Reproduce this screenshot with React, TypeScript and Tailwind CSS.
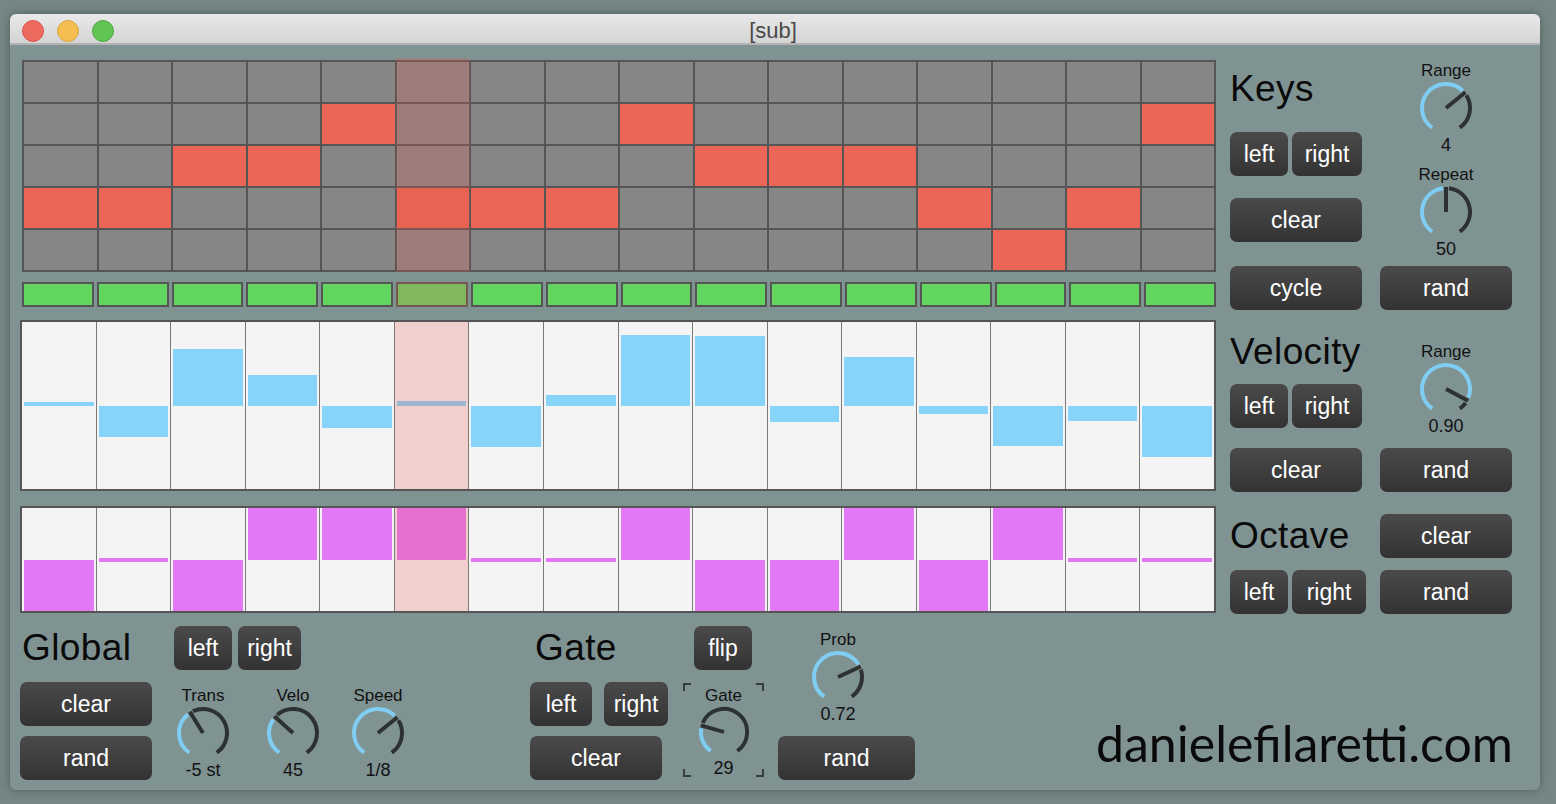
import React from "react";

const keys: number[][] = [[], [4, 8, 15], [2, 3, 9, 10, 11], [0, 1, 5, 6, 7, 12, 14], [13]];
const vel = [4, -31, 57, 31, -22, 5, -41, 11, 71, 70, -16, 49, -8, -40, -15, -51];
const oct = ["d", "l", "d", "u", "u", "u", "l", "l", "u", "d", "d", "u", "d", "u", "l", "l"];
const HL = 5;
const cols = Array.from({ length: 16 }, (_, i) => i);

function Btn({ label, w }: { label: string; w: string }) {
  return (
    <div
      className={`h-[44px] ${w} shrink-0 rounded-[7px] bg-[linear-gradient(180deg,#4a4a4a,#333333)] flex items-center justify-center text-white text-[23px] leading-none`}
    >
      {label}
    </div>
  );
}

function pt(a: number, r: number) {
  const rad = (a * Math.PI) / 180;
  return [28 + r * Math.sin(rad), 28 - r * Math.cos(rad)];
}
function arc(a1: number, a2: number, r: number) {
  const [x1, y1] = pt(a1, r);
  const [x2, y2] = pt(a2, r);
  const large = a2 - a1 > 180 ? 1 : 0;
  return `M ${x1} ${y1} A ${r} ${r} 0 ${large} 1 ${x2} ${y2}`;
}

function Knob({ label, value, frac }: { label: string; value: string; frac: number }) {
  const a = -145 + frac * 290;
  const [nx, ny] = pt(a, 25);
  return (
    <div className="w-[70px] flex flex-col items-center text-[#111]">
      <div className="h-[18px] leading-[18px] text-[17px] whitespace-nowrap">{label}</div>
      <svg width="56" height="56" viewBox="0 0 56 56">
        {a - 7 > -145 && <path d={arc(-145, a - 7, 24)} stroke="#7fcdf2" strokeWidth="4" fill="none" />}
        {a + 7 < 145 && <path d={arc(a + 7, 145, 24)} stroke="#2e3131" strokeWidth="4" fill="none" />}
        <line x1="28" y1="28" x2={nx} y2={ny} stroke="#2e3131" strokeWidth="4" />
      </svg>
      <div className="h-[18px] leading-[18px] text-[18px] whitespace-nowrap">{value}</div>
    </div>
  );
}

function Title({ t }: { t: string }) {
  return <div className="h-[44px] leading-[44px] text-[37px] tracking-[0.4px] text-[#0a0a0a]">{t}</div>;
}

function Overlay({ cls }: { cls: string }) {
  return <div className={`absolute ${cls} bg-[rgba(230,90,80,0.24)] pointer-events-none`} />;
}

export default function App() {
  return (
    <div className="w-[1556px] h-[804px] bg-[#748685] pt-[14px] pl-[10px] font-['Liberation_Sans',Arial,sans-serif]">
      <div className="w-[1530px] h-[776px] rounded-[6px] overflow-hidden shadow-[0_0_8px_rgba(0,0,0,0.3)] flex flex-col bg-[#809393]">
        {/* title bar */}
        <div className="h-[31px] shrink-0 bg-[linear-gradient(180deg,#e9e9e9,#d4d4d4)] border-b-2 border-[#b4b4b4] grid grid-cols-[1fr_auto_1fr] items-center">
          <div className="flex items-center gap-[13px] pl-[12px] pt-[1px]">
            <div className="w-[22px] h-[22px] rounded-full bg-[#ee6a5f] border border-[#d5554a]" />
            <div className="w-[22px] h-[22px] rounded-full bg-[#f6be50] border border-[#dca13e]" />
            <div className="w-[22px] h-[22px] rounded-full bg-[#61c554] border border-[#4fa842]" />
          </div>
          <div className="text-[22px] text-[#4a4a4a] pr-[4px]">[sub]</div>
          <div />
        </div>

        {/* top section */}
        <div className="flex pl-[10px]">
          {/* sequencer */}
          <div className="w-[1196px] flex flex-col">
            <div className="mt-[15px] ml-[2px] w-[1194px] h-[212px] bg-[#555555] p-[2px] flex gap-[2px]">
              {cols.map((c) => (
                <div key={c} className="relative flex-1 flex flex-col gap-[2px]">
                  {keys.map((row, r) => (
                    <div key={r} className={`flex-1 ${row.includes(c) ? "bg-[#ec6556]" : "bg-[#868686]"}`} />
                  ))}
                  {c === HL && <Overlay cls="-top-[4px] -bottom-[2px] -left-[1px] -right-[1px]" />}
                </div>
              ))}
            </div>
            <div className="mt-[10px] ml-[2px] w-[1194px] h-[25px] flex gap-[3px]">
              {cols.map((c) => (
                <div key={c} className="relative flex-1 bg-[#62d55f] border-2 border-[#555555]">
                  {c === HL && <Overlay cls="-inset-[2px]" />}
                </div>
              ))}
            </div>
            <div className="mt-[13px] w-[1196px] h-[171px] border-2 border-[#555555] bg-[#f4f4f4] flex">
              {cols.map((c) => (
                <div key={c} className={`relative flex-1 flex flex-col ${c > 0 ? "border-l border-[#7a7a7a]" : ""}`}>
                  <div className="flex-1 flex items-end px-[2px]">
                    {vel[c] > 0 && <div className="w-full bg-[#87d4fa]" style={{ height: vel[c] }} />}
                  </div>
                  <div className="flex-1 flex items-start px-[2px]">
                    {vel[c] < 0 && <div className="w-full bg-[#87d4fa]" style={{ height: -vel[c] }} />}
                  </div>
                  {c === HL && <Overlay cls="inset-0" />}
                </div>
              ))}
            </div>
            <div className="mt-[15px] w-[1196px] h-[107px] border-2 border-[#555555] bg-[#f4f4f4] flex">
              {cols.map((c) => (
                <div key={c} className={`relative flex-1 flex flex-col ${c > 0 ? "border-l border-[#7a7a7a]" : ""}`}>
                  <div className="flex-1 flex items-end px-[2px]">
                    {oct[c] === "u" && <div className="w-full h-full bg-[#e278f5]" />}
                    {oct[c] === "l" && <div className="w-full h-[2px] bg-[#e278f5]" />}
                  </div>
                  <div className="flex-1 flex items-start px-[2px]">
                    {oct[c] === "d" && <div className="w-full h-full bg-[#e278f5]" />}
                    {oct[c] === "l" && <div className="w-full h-[2px] bg-[#e278f5]" />}
                  </div>
                  {c === HL && <Overlay cls="inset-0" />}
                </div>
              ))}
            </div>
          </div>

          {/* right panel */}
          <div className="ml-[14px] w-[282px] flex flex-col">
            {/* Keys */}
            <div className="flex">
              <div className="w-[132px] flex flex-col pt-[22px]">
                <Title t="Keys" />
                <div className="mt-[21px] flex gap-[4px]">
                  <Btn label="left" w="w-[58px]" />
                  <Btn label="right" w="w-[70px]" />
                </div>
                <div className="mt-[22px]"><Btn label="clear" w="w-[132px]" /></div>
                <div className="mt-[24px]"><Btn label="cycle" w="w-[132px]" /></div>
              </div>
              <div className="ml-[18px] w-[132px] flex flex-col items-center pt-[17px]">
                <Knob label="Range" value="4" frac={0.676} />
                <div className="mt-[12px]"><Knob label="Repeat" value="50" frac={0.5} /></div>
                <div className="mt-[8px]"><Btn label="rand" w="w-[132px]" /></div>
              </div>
            </div>
            {/* Velocity */}
            <div className="flex mt-[20px]">
              <div className="w-[132px] flex flex-col">
                <Title t="Velocity" />
                <div className="mt-[10px] flex gap-[4px]">
                  <Btn label="left" w="w-[58px]" />
                  <Btn label="right" w="w-[70px]" />
                </div>
                <div className="mt-[20px]"><Btn label="clear" w="w-[132px]" /></div>
              </div>
              <div className="ml-[18px] w-[132px] flex flex-col items-center pt-[13px]">
                <Knob label="Range" value="0.90" frac={0.907} />
                <div className="mt-[13px]"><Btn label="rand" w="w-[132px]" /></div>
              </div>
            </div>
            {/* Octave */}
            <div className="flex mt-[22px]">
              <div className="w-[136px] flex flex-col">
                <Title t="Octave" />
                <div className="mt-[12px] flex gap-[4px]">
                  <Btn label="left" w="w-[58px]" />
                  <Btn label="right" w="w-[74px]" />
                </div>
              </div>
              <div className="ml-[14px] w-[132px] flex flex-col">
                <Btn label="clear" w="w-[132px]" />
                <div className="mt-[12px]"><Btn label="rand" w="w-[132px]" /></div>
              </div>
            </div>
          </div>
        </div>

        {/* bottom section */}
        <div className="flex items-start pl-[10px] pt-[12px]">
          {/* Global */}
          <div className="w-[132px] flex flex-col">
            <div className="pl-[2px]"><Title t="Global" /></div>
            <div className="mt-[12px]"><Btn label="clear" w="w-[132px]" /></div>
            <div className="mt-[10px]"><Btn label="rand" w="w-[132px]" /></div>
          </div>
          <div className="ml-[16px] w-[250px] flex flex-col">
            <div className="ml-[6px] flex gap-[6px]">
              <Btn label="left" w="w-[58px]" />
              <Btn label="right" w="w-[63px]" />
            </div>
            <div className="mt-[17px] flex">
              <Knob label="Trans" value="-5 st" frac={0.39} />
              <div className="ml-[20px]"><Knob label="Velo" value="45" frac={0.334} /></div>
              <div className="ml-[15px]"><Knob label="Speed" value="1/8" frac={0.676} /></div>
            </div>
          </div>
          {/* Gate */}
          <div className="ml-[112px] w-[137px] flex flex-col">
            <div className="pl-[5px]"><Title t="Gate" /></div>
            <div className="mt-[12px] flex gap-[12px]">
              <Btn label="left" w="w-[62px]" />
              <Btn label="right" w="w-[64px]" />
            </div>
            <div className="mt-[10px]"><Btn label="clear" w="w-[132px]" /></div>
          </div>
          <div className="ml-[16px] w-[81px] flex flex-col">
            <div className="ml-[11px]"><Btn label="flip" w="w-[58px]" /></div>
            <div className="relative mt-[13px] h-[94px] flex justify-center pt-[4px]">
              <div className="absolute left-0 top-0 w-[8px] h-[8px] border-l-2 border-t-2 border-[#3a3d3d]" />
              <div className="absolute right-0 top-0 w-[8px] h-[8px] border-r-2 border-t-2 border-[#3a3d3d]" />
              <div className="absolute left-0 bottom-0 w-[8px] h-[8px] border-l-2 border-b-2 border-[#3a3d3d]" />
              <div className="absolute right-0 bottom-0 w-[8px] h-[8px] border-r-2 border-b-2 border-[#3a3d3d]" />
              <Knob label="Gate" value="29" frac={0.245} />
            </div>
          </div>
          <div className="ml-[14px] w-[138px] flex flex-col">
            <div className="ml-[25px] pt-[5px]"><Knob label="Prob" value="0.72" frac={0.725} /></div>
            <div className="mt-[13px]"><Btn label="rand" w="w-[137px]" /></div>
          </div>
          <div className="flex-1 flex justify-end pr-[27px] pt-[92px]">
            <div className="text-[50px] leading-[50px] text-[#0a0a0a] font-['Lato',sans-serif] whitespace-nowrap">
              danielefilaretti.com
            </div>
          </div>
        </div>
      </div>
    </div>
  );
}
